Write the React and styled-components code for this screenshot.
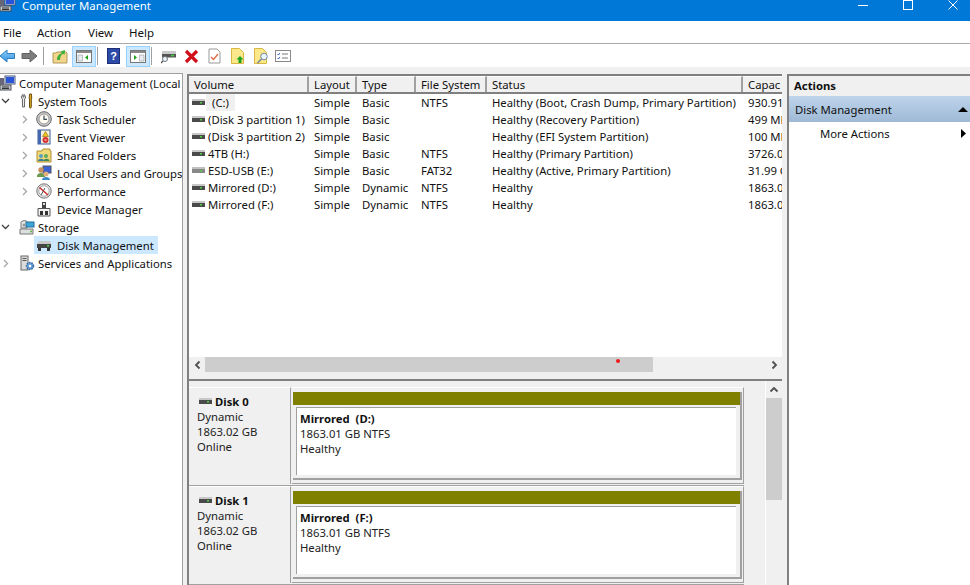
import React from "react";
import styled, { createGlobalStyle } from "styled-components";

const Global = createGlobalStyle`
  html, body { margin: 0; padding: 0; background: #f0f0f0; overflow: hidden; }
  * { box-sizing: border-box; }
  body { font-family: "Noto Sans", "Open Sans", sans-serif; font-size: 11.3px; color: #111; }
`;

const Window = styled.div`
  width: 970px; height: 585px; display: flex; flex-direction: column; overflow: hidden; background: #f0f0f0;
`;
const TitleBar = styled.div`
  height: 21px; flex: none; margin-right: -5px; background: #0078d7; color: #fff; display: flex; align-items: flex-start;
  font-size: 11.4px; line-height: 11px; overflow: hidden;
`;
const TitleIcon = styled.span`flex: none; margin-top: -4px;`;
const TitleText = styled.span`margin-left: 6px; flex: 1;`;
const WinButton = styled.span`
  width: 45px; height: 11px; display: flex; justify-content: center; align-items: flex-start;
`;
const MenuBar = styled.div`
  height: 23px; flex: none; background: #fff; border-bottom: 1px solid #a9a9a9; display: flex; align-items: center;
`;
const MenuItem = styled.span`margin-left: ${p => p.$left}px; width: ${p => p.$width}px; font-size: 11.5px;`;
const Toolbar = styled.div`
  height: 23px; flex: none; background: #fff; display: flex; align-items: center; padding-top: 1px;
`;
const ToolButton = styled.span`
  flex: none; width: ${p => p.$w}px; height: 21px; margin-left: ${p => p.$left || 0}px; display: flex; align-items: center; justify-content: center;
  background: ${p => p.$active ? "#cce8ff" : "transparent"};
  border: ${p => p.$active ? "1px solid #99d1ff" : "none"};
`;
const ToolSep = styled.span`flex: none; width: 1px; height: 18px; background: #a0a0a0; margin-left: ${p => p.$left}px;`;

const Panes = styled.div`flex: 1; min-height: 0; display: flex; padding-top: 6px;`;

const TreePane = styled.div`
  width: 183px; flex: none; background: #fff; border-top: 1px solid #a0a0a0; border-right: 1px solid #a0a0a0; overflow: hidden;
`;
const TreeRow = styled.div`
  height: 18px; display: flex; align-items: center; white-space: nowrap; padding-left: ${p => p.$indent}px;
`;
const Chevron = styled.span`
  flex: none; width: ${p => p.$w}px; padding-right: ${p => p.$w - 11}px; display: flex; align-items: center; justify-content: center;
`;
const TreeIcon = styled.span`flex: none; width: 16px; height: 16px; display: flex; align-items: center; justify-content: center;`;
const TreeLabel = styled.span`
  display: flex; align-items: center; height: 18px; padding: 0 3px 0 ${p => p.$pad}px;
`;
const TreeEntry = styled.span`
  display: flex; align-items: center; height: 18px; padding: 0 ${p => p.$selected ? 1 : 3}px 0 2px; background: ${p => p.$selected ? "#cce8ff" : "transparent"};
`;

const Center = styled.div`
  width: 595px; flex: none; margin-left: 4px; margin-top: 1px; display: flex; flex-direction: column; border-top: 2px solid #808080; border-left: 2px solid #808080;
`;
const ListPane = styled.div`height: 305px; flex: none; display: flex; flex-direction: column; background: #f0f0f0; border-bottom: 2px solid #808080; overflow: hidden;`;
const HeaderRow = styled.div`display: flex; height: 18px; flex: none; background: #f0f0f0; border-bottom: 2px solid #808080; overflow: hidden;`;
const HeaderCell = styled.div`
  flex: none; width: ${p => p.$w}px; padding-left: ${p => p.$pad}px; line-height: 15px; white-space: nowrap; overflow: hidden;
  border-right: ${p => p.$last ? "none" : "2px solid #a0a0a0"}; border-top: 1px solid #fff;
`;
const Rows = styled.div`flex: 1; min-height: 0; background: #fff;`;
const Row = styled.div`display: flex; height: 17px; align-items: center; white-space: nowrap;`;
const Cell = styled.div`
  flex: none; width: ${p => p.$w}px; padding-left: ${p => p.$pad}px; overflow: hidden; display: flex; align-items: center; height: 17px;
`;
const VolumeName = styled.span`
  margin-left: ${p => p.$hover ? 1 : 3}px; height: 17px; line-height: 17px; padding: 0 ${p => p.$hover ? "6px" : "0"}; background: ${p => p.$hover ? "#f0f0f0" : "transparent"};
`;
const HScroll = styled.div`height: 16px; flex: none; background: #f0f0f0; display: flex; align-items: flex-start; margin-bottom: 6px;`;
const ScrollArrow = styled.span`flex: none; width: ${p => p.$w || 16}px; height: ${p => p.$h || 16}px; display: flex; align-items: center; justify-content: center;`;
const HThumb = styled.div`height: 15px; width: 448px; background: #cdcdcd; flex: none; position: relative;`;
const Dot = styled.span`position: absolute; left: 411px; top: 2px; width: 4px; height: 4px; border-radius: 50%; background: #f01818;`;
const HTrack = styled.div`flex: 1;`;

const DiskPane = styled.div`flex: 1; min-height: 0; display: flex; background: #f0f0f0; overflow: hidden;`;
const DiskList = styled.div`flex: 1; min-width: 0; padding-top: 6px;`;
const DiskRow = styled.div`height: 99px; display: flex; border-bottom: 1px solid #a0a0a0; margin-right: 21px; padding-bottom: 1px;`;
const DiskInfo = styled.div`
  width: 102px; flex: none; padding: 5px 0 0 8px; line-height: 15px; border-right: 1px solid #a0a0a0; border-top: 1px solid #fff; color: #222;
`;
const DiskTitle = styled.div`display: flex; align-items: center; font-weight: 700; gap: 3px; height: 16px; padding-left: 2px; color: #111;`;
const VolumeFrame = styled.div`
  flex: 1; margin-left: 1px; border: solid #a0a0a0; border-width: 0 1px 1px 0; border-top: 1px solid #fff; padding: 4px 1px 3px 1px; display: flex;
`;
const VolumeBox = styled.div`
  flex: 1; border: solid #a0a0a0; border-width: 0 2px 2px 0; display: flex; flex-direction: column; background: #f0f0f0;
`;
const OliveBar = styled.div`height: 13px; flex: none; background: #808000; margin-bottom: 2px;`;
const Region = styled.div`
  flex: 1; margin: 0 4px 3px 3px; background: #fff; border-top: 1px solid #a0a0a0; border-left: 1px solid #a0a0a0; padding: 3px 0 0 3px; line-height: 15px; color: #222;
`;
const RegionTitle = styled.div`font-weight: 700; color: #111; white-space: pre;`;
const VScroll = styled.div`width: 17px; flex: none; display: flex; flex-direction: column; border-left: 1px solid #fff;`;
const VThumb = styled.div`height: 102px; background: #cdcdcd; flex: none;`;

const ActionsPane = styled.div`
  width: 183px; flex: none; margin-left: 5px; margin-top: 1px; background: #fff; border-top: 2px solid #808080; border-left: 2px solid #808080;
`;
const ActionsHead = styled.div`height: 20px; background: #f0f0f0; padding-left: 5px; line-height: 19px; font-weight: 700; color: #111;`;
const ActionsBand = styled.div`
  height: 26px; display: flex; align-items: center; justify-content: space-between; padding: 0 1px 0 6px;
  background: linear-gradient(#bdd4ea, #9fb9d6); color: #111;
`;
const ActionItem = styled.div`
  height: 23px; display: flex; align-items: center; justify-content: space-between; padding: 0 4px 0 31px;
`;

/* ----------- drawings ----------- */
const S = ({ w = 16, h = 16, children }) => <svg width={w} height={h} viewBox={`0 0 ${w} ${h}`} style={{ display: "block", flex: "none" }}>{children}</svg>;

const Computer = () => <S><rect x="5" y="1" width="10" height="8" fill="#dfe6f0" stroke="#4a5a80"/><rect x="6" y="2" width="8" height="6" fill="#2a55d8"/><rect x="0" y="10" width="11" height="5" fill="#c4c9d0" stroke="#4b4f58"/><path d="M2 12h7M2 13.500h7" stroke="#333"/><rect x="0" y="3" width="4" height="7" fill="#667"/></S>;
const Tools = () => <S><path d="M4 1.500c-2 1-2 3.500-.6 4.500L3.500 14h2l.1-8c1.400-1 1.400-3.500-.6-4.500V4H4z" fill="#e9e9e9" stroke="#666"/><path d="M10.500 1h2l.2 5h-.4V14c-.3 1.500-1.600 1.500-1.800 0V6h-.3z" fill="#e8a820" stroke="#6a5210"/></S>;
const Clock = () => <S><circle cx="8" cy="8" r="7.300" fill="#c9c9c9" stroke="#666"/><circle cx="8" cy="8" r="5" fill="#fffdf2" stroke="#999"/><path d="M8 4.500V8.300H11" fill="none" stroke="#3a4a5a" strokeWidth="1.200"/></S>;
const EventLog = () => <S><rect x="2" y="1" width="12" height="14" fill="#f4f1d8" stroke="#3b5a9a"/><rect x="2" y="1" width="3" height="14" fill="#4468b0"/><path d="M9.500 2.500l3 5h-6z" fill="#f2c020" stroke="#8a6a10" strokeWidth=".6"/><circle cx="9.500" cy="11" r="3" fill="#d83030"/><path d="M8.500 11h2" stroke="#fff"/></S>;
const SharedFolder = () => <S><path d="M1 4h5l1-2h7v2h1v11H1z" fill="#f0d878" stroke="#b09030"/><circle cx="5" cy="9" r="2" fill="#58a0c0"/><path d="M2 14c0-3 6-3 6 0z" fill="#3a7a9a"/><circle cx="10" cy="9" r="2" fill="#60a860"/><path d="M7.500 14c0-3 6-3 6 0z" fill="#3a8a5a"/></S>;
const Users = () => <S><rect x="7" y="1" width="8" height="7" fill="#3a62d0" stroke="#556"/><circle cx="5" cy="5" r="2.700" fill="#c89060"/><path d="M1 11c0-4 8-4 8 0v1H1z" fill="#6a9a50"/><circle cx="10" cy="9" r="2.500" fill="#e0b080"/><path d="M6 15c0-4 8-4 8 0z" fill="#3a8ac8"/></S>;
const Perf = () => <S><circle cx="8" cy="8" r="7.200" fill="#e4e4e4" stroke="#777"/><circle cx="8" cy="8" r="5.200" fill="#fff" stroke="#aaa"/><path d="M3.500 4.500L12 12" stroke="#d02020" strokeWidth="1.400"/><path d="M5 12L9 5" stroke="#555"/></S>;
const Device = () => <S><rect x="6" y="1" width="4" height="6" fill="#444"/><rect x="7" y="2" width="2" height="2" fill="#ddd"/><path d="M2 7.500h12V15H2z" fill="#f2f2f2" stroke="#555"/><rect x="4" y="10" width="3" height="4" fill="#333"/><rect x="9" y="10" width="3" height="4" fill="#333"/></S>;
const Storage = () => <S><path d="M1 10h13v5H1z" fill="#dde0e0" stroke="#777"/><circle cx="12" cy="12.500" r="1" fill="#5ab030"/><path d="M2 3c2-2 7-2 6 1v5H2z" fill="#e6e6e6" stroke="#777"/><rect x="7" y="3" width="8" height="5" fill="#3aa8d8" stroke="#2a6a98"/><circle cx="5" cy="6" r="1.500" fill="#999"/></S>;
const Disk = () => <S><path d="M3 4h11l1 3H1z" fill="#c8c8c8"/><rect x="1" y="7" width="14" height="4" fill="#444"/><rect x="11" y="8" width="2" height="1.500" fill="#50d040"/><rect x="2" y="11" width="3" height="3" fill="#333"/><rect x="11" y="11" width="3" height="3" fill="#333"/></S>;
const Services = () => <S><rect x="2" y="1" width="7" height="14" fill="#dcdcdc" stroke="#666"/><path d="M3.500 3.500h4M3.500 5.500h4" stroke="#555"/><circle cx="11" cy="11" r="3.500" fill="#6aa0d8" stroke="#3a6aa0" strokeWidth="1.500" strokeDasharray="1.500 1"/><circle cx="11" cy="11" r="1.200" fill="#fff"/></S>;
const Drive = ({ usb }) => <S w={13} h={7}><rect x="0" y="0" width="13" height="2" fill={usb ? "#c0c0c0" : "#c8c8c8"}/><rect x="0" y="2" width="13" height="4" fill={usb ? "#888" : "#4a4a4a"}/><rect x="8" y="3" width="2" height="1.500" fill="#4fd040"/></S>;

const ChevronIcon = ({ open }) => open
  ? <S w={9} h={6}><path d="M1 1l3.500 3.500L8 1" fill="none" stroke="#404040" strokeWidth="1.300"/></S>
  : <S w={6} h={9}><path d="M1 1l3.500 3.500L1 8" fill="none" stroke="#a6a6a6" strokeWidth="1.300"/></S>;

const BackArrow = () => <S w={15} h={14}><defs><linearGradient id="bk" x1="0" y1="0" x2="0" y2="1"><stop offset="0" stopColor="#8fd0fa"/><stop offset="1" stopColor="#2f8fe0"/></linearGradient></defs><path d="M0 7l7-6v3.500h7.500v5H7V13z" fill="url(#bk)" stroke="#2f7fc0"/></S>;
const ForwardArrow = () => <S w={17} h={14}><path d="M16 7L9 1v3.500H1v5h8V13z" fill="#7c7c7c" stroke="#626262"/></S>;
const FolderUp = () => <S><path d="M1 5h3l1-1h9l1 1v10H1z" fill="#f2d58a" stroke="#b09858"/><path d="M5 12c0-4 2-6 5-7L8.500 3.500 13 2l-.5 5L11 5.800C9 7 8 9 8 12z" fill="#3cae3c"/></S>;
const PaneToggle = ({ right }) => <S w={16} h={13}><rect x=".5" y=".5" width="15" height="12" fill="#fff" stroke="#777"/><rect x="1" y="1" width="14" height="2" fill="#888"/><path d={right ? "M9.500 5h4.500v6H9.500z" : "M2 5h4.500v6H2z"} fill="#e6ecf2" stroke="#999" strokeWidth=".6"/>{right ? <path d="M4 5l3 2.500L4 10z" fill="#18a018"/> : <path d="M12 5L9 7.500l3 2.500z" fill="#18a018"/>}</S>;
const Help = () => <S w={13} h={16}><rect x=".5" y=".5" width="12" height="15" fill="#2c4aa8" stroke="#1e2f78"/><text x="6.500" y="12" textAnchor="middle" fontSize="11" fontWeight="700" fill="#fff" fontFamily="Liberation Sans">?</text></S>;
const Connect = () => <S><rect x="1" y="3" width="14" height="3" fill="#c8c8c8"/><rect x="1" y="6" width="14" height="3.500" fill="#555"/><rect x="10" y="6.800" width="3" height="1.500" fill="#40d040"/><circle cx="4" cy="11" r="2.500" fill="#e8f4ff" stroke="#777"/><path d="M2 13l-2 2" stroke="#555" strokeWidth="1.500"/></S>;
const RedX = () => <S w={15} h={15}><path d="M2 2l11 11M13 2L2 13" stroke="#d0101a" strokeWidth="3.200"/></S>;
const CheckDoc = () => <S w={13} h={16}><path d="M1 1h8l3 3v11H1z" fill="#fff" stroke="#999"/><path d="M3 9l2.500 2.500L10 6" fill="none" stroke="#e06a40" strokeWidth="1.300"/></S>;
const YellowUp = () => <S w={13} h={16}><path d="M.5.500h8l4 4v11H.5z" fill="#fbe88a" stroke="#d8b840"/><path d="M9 8l3.500 3.500H10.500V15h-3v-3.500h-2z" fill="#20a020"/></S>;
const YellowFind = () => <S><path d="M.5.500h8l4 4v11H.5z" fill="#fbe88a" stroke="#d8b840"/><circle cx="10" cy="8.500" r="3.300" fill="#e8f4ff" stroke="#789"/><path d="M7.500 11l-4 4" stroke="#789" strokeWidth="1.600"/></S>;
const ListIcon = () => <S><rect x=".5" y="2.500" width="15" height="11" fill="#fff" stroke="#888"/><path d="M2.500 6l1 1 1.500-2M2.500 10l1 1 1.500-2" fill="none" stroke="#3060c0"/><path d="M7 6h6M7 10h6" stroke="#777"/></S>;

const treeIcons = { Computer, Tools, Clock, EventLog, SharedFolder, Users, Perf, Device, Storage, Disk, Services };

const tree = [
  { icon: "Computer", label: "Computer Management (Local", level: 0 },
  { icon: "Tools", label: "System Tools", level: 1, open: true },
  { icon: "Clock", label: "Task Scheduler", level: 2, closed: true },
  { icon: "EventLog", label: "Event Viewer", level: 2, closed: true },
  { icon: "SharedFolder", label: "Shared Folders", level: 2, closed: true },
  { icon: "Users", label: "Local Users and Groups", level: 2, closed: true },
  { icon: "Perf", label: "Performance", level: 2, closed: true },
  { icon: "Device", label: "Device Manager", level: 2 },
  { icon: "Storage", label: "Storage", level: 1, open: true },
  { icon: "Disk", label: "Disk Management", level: 2, selected: true },
  { icon: "Services", label: "Services and Applications", level: 1, closed: true },
];

const cols = [
  { name: "Volume", w: 120, pad: 5 },
  { name: "Layout", w: 48, pad: 5 },
  { name: "Type", w: 59, pad: 5 },
  { name: "File System", w: 71, pad: 5 },
  { name: "Status", w: 256, pad: 5 },
  { name: "Capac", w: 39, pad: 5, last: true },
];
const rows = [
  ["(C:)", "Simple", "Basic", "NTFS", "Healthy (Boot, Crash Dump, Primary Partition)", "930.91 GB"],
  ["(Disk 3 partition 1)", "Simple", "Basic", "", "Healthy (Recovery Partition)", "499 MB"],
  ["(Disk 3 partition 2)", "Simple", "Basic", "", "Healthy (EFI System Partition)", "100 MB"],
  ["4TB (H:)", "Simple", "Basic", "NTFS", "Healthy (Primary Partition)", "3726.02 GB"],
  ["ESD-USB (E:)", "Simple", "Basic", "FAT32", "Healthy (Active, Primary Partition)", "31.99 GB"],
  ["Mirrored (D:)", "Simple", "Dynamic", "NTFS", "Healthy", "1863.01 GB"],
  ["Mirrored (F:)", "Simple", "Dynamic", "NTFS", "Healthy", "1863.01 GB"],
];
const disks = [
  { name: "Disk 0", vol: "Mirrored  (D:)" },
  { name: "Disk 1", vol: "Mirrored  (F:)" },
];

const Tri = ({ d, w = 12, h = 8 }) => <S w={w} h={h}><path d={d} fill="#000"/></S>;

export default function App() {
  return (
    <Window>
      <Global />
      <TitleBar>
        <TitleIcon><Computer /></TitleIcon>
        <TitleText>Computer Management</TitleText>
        <WinButton><S w={10} h={11}><path d="M0 5.500h10" stroke="#fff"/></S></WinButton>
        <WinButton><S w={10} h={11}><rect x=".5" y=".5" width="9" height="9" fill="none" stroke="#fff"/></S></WinButton>
        <WinButton><S w={10} h={11}><path d="M.5.500l9 9M9.500.500l-9 9" stroke="#fff"/></S></WinButton>
      </TitleBar>
      <MenuBar>
        <MenuItem $left={3} $width={34}>File</MenuItem>
        <MenuItem $left={0} $width={51}>Action</MenuItem>
        <MenuItem $left={0} $width={41}>View</MenuItem>
        <MenuItem $left={0} $width={40}>Help</MenuItem>
      </MenuBar>
      <Toolbar>
        <ToolButton $w={15}><BackArrow /></ToolButton>
        <ToolButton $w={17} $left={6}><ForwardArrow /></ToolButton>
        <ToolSep $left={5} />
        <ToolButton $w={16} $left={8}><FolderUp /></ToolButton>
        <ToolButton $w={24} $left={4} $active><PaneToggle /></ToolButton>
        <ToolSep $left={1} />
        <ToolButton $w={13} $left={9}><Help /></ToolButton>
        <ToolButton $w={24} $left={6} $active><PaneToggle right /></ToolButton>
        <ToolSep $left={1} />
        <ToolButton $w={16} $left={9}><Connect /></ToolButton>
        <ToolButton $w={15} $left={7}><RedX /></ToolButton>
        <ToolButton $w={13} $left={9}><CheckDoc /></ToolButton>
        <ToolButton $w={13} $left={10}><YellowUp /></ToolButton>
        <ToolButton $w={16} $left={10}><YellowFind /></ToolButton>
        <ToolButton $w={16} $left={5}><ListIcon /></ToolButton>
      </Toolbar>
      <Panes>
        <TreePane>
          {tree.map(t => {
            const I = treeIcons[t.icon];
            if (t.level === 0) return (
              <TreeRow key={t.label} $indent={0}><TreeIcon><I /></TreeIcon><TreeLabel $pad={3}>{t.label}</TreeLabel></TreeRow>
            );
            const indent = t.level === 1 ? 0 : 19;
            return (
              <TreeRow key={t.label} $indent={indent}>
                <Chevron $w={t.level === 1 ? 17 : 15}>{t.open ? <ChevronIcon open /> : t.closed ? <ChevronIcon /> : null}</Chevron>
                <TreeEntry $selected={t.selected}>
                  <TreeIcon><I /></TreeIcon>
                  <TreeLabel $pad={t.level === 1 ? 3 : 5}>{t.label}</TreeLabel>
                </TreeEntry>
              </TreeRow>
            );
          })}
        </TreePane>
        <Center>
          <ListPane>
            <HeaderRow>
              {cols.map(c => <HeaderCell key={c.name} $w={c.w} $pad={c.pad} $last={c.last}>{c.name}</HeaderCell>)}
            </HeaderRow>
            <Rows>
              {rows.map((r, i) => (
                <Row key={r[0]}>
                  {r.map((v, j) => j === 0 ? (
                    <Cell key={j} $w={cols[0].w} $pad={3}>
                      <Drive usb={i === 4} />
                      <VolumeName $hover={i === 0}>{v}</VolumeName>
                    </Cell>
                  ) : (
                    <Cell key={j} $w={cols[j].w} $pad={cols[j].pad}>{v}</Cell>
                  ))}
                </Row>
              ))}
            </Rows>
            <HScroll>
              <ScrollArrow><S w={7} h={10}><path d="M5.500 1.500L2 5l3.500 3.500" fill="none" stroke="#505050" strokeWidth="1.800"/></S></ScrollArrow>
              <HThumb><Dot /></HThumb>
              <HTrack />
              <ScrollArrow><S w={7} h={10}><path d="M1.500 1.500L5 5 1.500 8.500" fill="none" stroke="#505050" strokeWidth="1.800"/></S></ScrollArrow>
            </HScroll>
          </ListPane>
          <DiskPane>
            <DiskList>
              {disks.map(d => (
                <DiskRow key={d.name}>
                  <DiskInfo>
                    <DiskTitle><Drive />{d.name}</DiskTitle>
                    <div>Dynamic</div>
                    <div>1863.02 GB</div>
                    <div>Online</div>
                  </DiskInfo>
                  <VolumeFrame>
                    <VolumeBox>
                      <OliveBar />
                      <Region>
                        <RegionTitle>{d.vol}</RegionTitle>
                        <div>1863.01 GB NTFS</div>
                        <div>Healthy</div>
                      </Region>
                    </VolumeBox>
                  </VolumeFrame>
                </DiskRow>
              ))}
            </DiskList>
            <VScroll>
              <ScrollArrow $h={17}><S w={10} h={7}><path d="M1.500 5.500L5 2l3.500 3.500" fill="none" stroke="#505050" strokeWidth="1.800"/></S></ScrollArrow>
              <VThumb />
            </VScroll>
          </DiskPane>
        </Center>
        <ActionsPane>
          <ActionsHead>Actions</ActionsHead>
          <ActionsBand>Disk Management<Tri d="M1 6l5-5 5 5z" h={7}/></ActionsBand>
          <ActionItem>More Actions<Tri d="M0 0l5 4.500L0 9z" w={5} h={9}/></ActionItem>
        </ActionsPane>
      </Panes>
    </Window>
  );
}
